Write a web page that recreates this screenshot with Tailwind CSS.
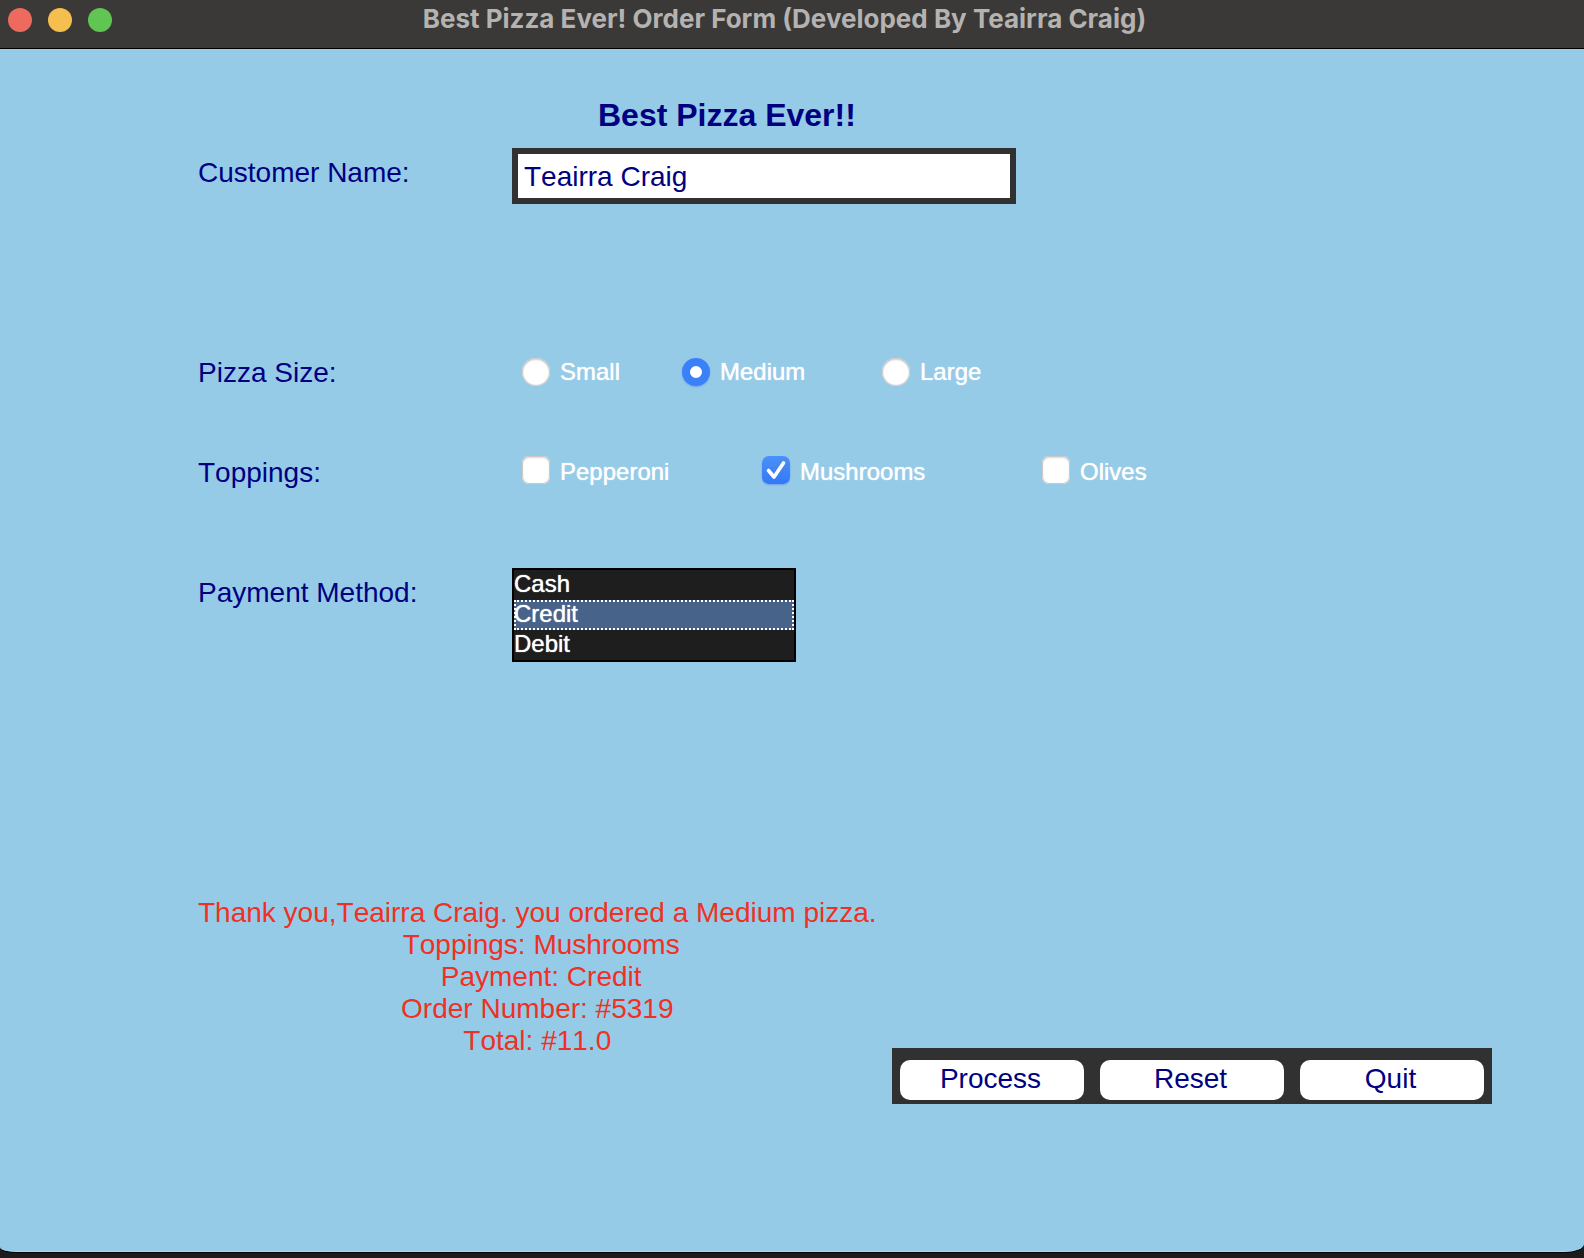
<!DOCTYPE html>
<html lang="en">
<head>
<meta charset="utf-8">
<meta name="viewport" content="width=device-width, initial-scale=1">
<title>Best Pizza Ever! Order Form</title>
<script src="https://cdn.jsdelivr.net/npm/@tailwindcss/browser@4"></script>
</head>
<body class="flex min-h-screen flex-col bg-[#1c1c1c] pb-[6px] font-['Liberation_Sans',Arial,sans-serif]">
<div class="flex grow flex-col overflow-hidden rounded-br-[20px_8px] rounded-bl-[16px_5px] border-b border-[#a9dcf5] bg-[#96cbe8] shadow-[0_1px_0_#000]">
  <header class="flex h-[49px] shrink-0 items-start border-b border-black bg-[#3a3937] px-2">
    <div class="flex w-[104px] gap-4 pt-2">
      <button type="button" aria-label="Close" class="size-6 rounded-full bg-[#ec6a5e]"></button>
      <button type="button" aria-label="Minimize" class="size-6 rounded-full bg-[#f5bf4f]"></button>
      <button type="button" aria-label="Zoom" class="size-6 rounded-full bg-[#61c554]"></button>
    </div>
    <h1 class="grow pt-[3px] pr-[119px] text-center font-['Inter',sans-serif] text-[26px] leading-8 font-bold text-[#b5b3b1] [font-optical-sizing:none]">Best Pizza Ever! Order Form (Developed By Teairra Craig)</h1>
  </header>

  <main class="grow">
    <form class="flex flex-col pt-[46px] pl-[198px] text-[28px] leading-8 text-[#000080] [font-kerning:none]">
      <h2 class="pl-[400px] text-[32px] leading-10 font-bold">Best Pizza Ever!!</h2>

      <div class="mt-[13px] flex">
        <label for="name" class="w-[314px] pt-[9px]">Customer Name:</label>
        <input id="name" type="text" value="Teairra Craig" class="h-14 w-[504px] border-6 border-[#313131] bg-white px-[6px] pt-[2px] outline-none [font-kerning:none]">
      </div>

      <div role="radiogroup" aria-labelledby="size" class="mt-[153px] flex items-start">
        <span id="size" class="w-[324px]">Pizza Size:</span>
        <label class="flex w-40 items-center gap-[10px] text-2xl leading-[30px] text-white text-shadow-[0_0_1px_#fff]"><input type="radio" name="size" class="size-7 appearance-none rounded-full bg-white shadow-[inset_0_0_1px_1px_#c9c5c2,inset_0_2px_2px_#dddddd]">Small</label>
        <label class="flex w-50 items-center gap-[10px] text-2xl leading-[30px] text-white text-shadow-[0_0_1px_#fff]"><input type="radio" name="size" checked class="size-7 appearance-none rounded-full border-8 border-[#3b80f7] bg-white shadow-[0_1px_2px_#6f9fe8]">Medium</label>
        <label class="flex items-center gap-[10px] text-2xl leading-[30px] text-white text-shadow-[0_0_1px_#fff]"><input type="radio" name="size" class="size-7 appearance-none rounded-full bg-white shadow-[inset_0_0_1px_1px_#c9c5c2,inset_0_2px_2px_#dddddd]">Large</label>
      </div>

      <div role="group" aria-labelledby="toppings" class="mt-[67px] flex">
        <span id="toppings" class="w-[324px] pt-px">Toppings:</span>
        <label class="flex w-60 gap-[10px] text-2xl leading-8 text-white text-shadow-[0_0_1px_#fff]"><input type="checkbox" class="size-7 appearance-none rounded-[7px] bg-white shadow-[inset_0_0_1px_1px_#c9c5c2,inset_0_2px_2px_#dddddd]">Pepperoni</label>
        <label class="flex w-70 gap-[10px] text-2xl leading-8 text-white text-shadow-[0_0_1px_#fff]">
          <span class="relative block size-7">
            <input type="checkbox" checked class="block size-7 appearance-none rounded-[7px] bg-linear-to-b from-[#4b91f8] to-[#3478f6] shadow-[0_1px_2px_#6f9fe8]">
            <svg viewBox="0 0 28 28" class="pointer-events-none absolute inset-0 size-7" fill="none" stroke="#fff" stroke-width="3.600" stroke-linecap="round" stroke-linejoin="round"><path d="M6.500 14.500L12 21 21.500 7"/></svg>
          </span>Mushrooms</label>
        <label class="flex gap-[10px] text-2xl leading-8 text-white text-shadow-[0_0_1px_#fff]"><input type="checkbox" class="size-7 appearance-none rounded-[7px] bg-white shadow-[inset_0_0_1px_1px_#c9c5c2,inset_0_2px_2px_#dddddd]">Olives</label>
      </div>

      <div class="mt-[79px] flex">
        <label for="payment" class="w-[314px] pt-[9px]">Payment Method:</label>
        <select id="payment" size="3" class="h-[94px] w-[284px] appearance-none overflow-hidden border-2 border-black bg-[#1e1e1e] p-0 text-2xl text-white outline-none text-shadow-[0_0_1px_#fff]">
          <option class="h-[30px] min-h-0 p-0 leading-[30px] text-white">Cash</option>
          <option selected class="h-[30px] min-h-0 bg-linear-to-b from-[#486389] to-[#486389] p-0 leading-[30px] text-white outline-2 -outline-offset-2 outline-dotted outline-white [-webkit-text-fill-color:#fff]">Credit</option>
          <option class="h-[30px] min-h-0 p-0 leading-[30px] text-white">Debit</option>
        </select>
      </div>

      <div class="mt-[235px] flex items-start justify-between pr-[92px]">
        <output for="name payment" class="block text-center whitespace-pre text-[#ee3124]">Thank you,Teairra Craig. you ordered a Medium pizza.
 Toppings: Mushrooms
 Payment: Credit
Order Number: #5319
Total: #11.0</output>
        <div class="mt-[151px] flex h-14 gap-4 bg-[#313131] px-2 pt-3 pb-1">
          <button type="button" class="h-10 w-[184px] rounded-[10px] bg-white pr-[3px] pb-[3px]">Process</button>
          <button type="button" class="h-10 w-[184px] rounded-[10px] bg-white pr-[3px] pb-[3px]">Reset</button>
          <button type="button" class="h-10 w-[184px] rounded-[10px] bg-white pr-[3px] pb-[3px]">Quit</button>
        </div>
      </div>
    </form>
  </main>
</div>
</body>
</html>
